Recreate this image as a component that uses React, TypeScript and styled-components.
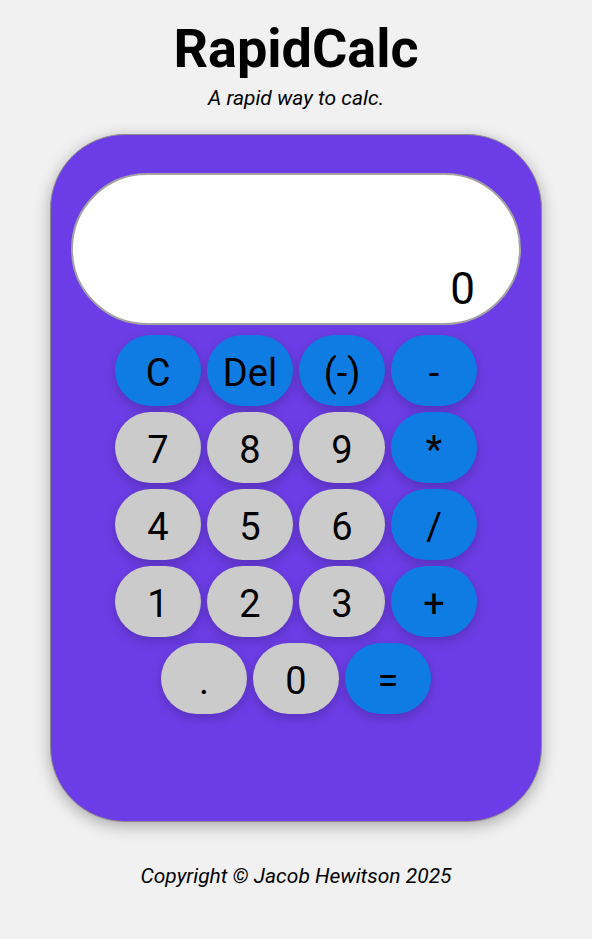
import React, { useState } from 'react';
import styled, { createGlobalStyle } from 'styled-components';

const GlobalStyle = createGlobalStyle`
  *, *::before, *::after { box-sizing: border-box; }
  body {
    margin: 0;
    background: #f1f1f1;
    color: #000;
    font-family: Roboto, sans-serif;
  }
`;

const Page = styled.div`
  display: flex;
  flex-direction: column;
  align-items: center;
  min-height: 100vh;
  padding: 17px 50px 48px;
`;

const Title = styled.h1`
  margin: 0;
  font-size: 54px;
  line-height: 64px;
  font-weight: 700;
`;

const Tagline = styled.p`
  margin: 3px 0 0;
  font-size: 21px;
  line-height: 28px;
  font-style: italic;
`;

const Body = styled.main`
  display: flex;
  flex-direction: column;
  align-items: center;
  width: 100%;
  max-width: 492px;
  margin-top: 22px;
  padding: 38px 20px 107px;
  border: 1px solid #8c8c8c;
  border-radius: 75px;
  background: #6c3de6;
  box-shadow: 0 4px 16px rgba(0, 0, 0, 0.3);
`;

const Display = styled.output`
  display: flex;
  align-items: flex-end;
  justify-content: flex-end;
  width: 100%;
  height: 152px;
  padding: 0 44px 8px;
  border: 2px solid #a3a3a3;
  border-radius: 76px;
  background: #fff;
  font-size: 44px;
  line-height: 52px;
  overflow: hidden;
`;

const Keypad = styled.div`
  display: flex;
  flex-direction: column;
  gap: 6px;
  margin-top: 10px;
`;

const Row = styled.div`
  display: flex;
  justify-content: center;
  gap: 6px;
`;

const Key = styled.button<{ $accent?: boolean }>`
  width: 86px;
  height: 71px;
  padding: 4px 0 0;
  border: 0;
  border-radius: 36px;
  background: ${({ $accent }) => ($accent ? '#0f7ce3' : '#cbcbcb')};
  color: #000;
  font: 400 38px/44px Roboto, sans-serif;
  box-shadow: 0 4px 12px rgba(0, 0, 0, 0.2);
  cursor: pointer;
`;

const Footer = styled.footer`
  margin-top: 40px;
  font-size: 21px;
  line-height: 28px;
  font-style: italic;
`;

const rows = [
  ['C', 'Del', '(-)', '-'],
  ['7', '8', '9', '*'],
  ['4', '5', '6', '/'],
  ['1', '2', '3', '+'],
  ['.', '0', '='],
];

const operators = ['-', '*', '/', '+'];

function compute(a: number, op: string, b: number) {
  if (op === '+') return a + b;
  if (op === '-') return a - b;
  if (op === '*') return a * b;
  return a / b;
}

export default function App() {
  const [value, setValue] = useState('0');
  const [stored, setStored] = useState<number | null>(null);
  const [operator, setOperator] = useState('');
  const [fresh, setFresh] = useState(true);

  const press = (key: string) => {
    if (key === 'C') {
      setValue('0');
      setStored(null);
      setOperator('');
      setFresh(true);
    } else if (key === 'Del') {
      setValue(value.length > 1 ? value.slice(0, -1) : '0');
      if (value.length <= 1) setFresh(true);
    } else if (key === '(-)') {
      setValue(String(-Number(value)));
    } else if (operators.includes(key) || key === '=') {
      const result =
        stored !== null && operator ? compute(stored, operator, Number(value)) : Number(value);
      setValue(String(result));
      setStored(key === '=' ? null : result);
      setOperator(key === '=' ? '' : key);
      setFresh(true);
    } else {
      if (key === '.' && !fresh && value.includes('.')) return;
      setValue(fresh ? (key === '.' ? '0.' : key) : value + key);
      setFresh(false);
    }
  };

  return (
    <>
      <GlobalStyle />
      <Page>
        <Title>RapidCalc</Title>
        <Tagline>A rapid way to calc.</Tagline>
        <Body>
          <Display>{value}</Display>
          <Keypad>
            {rows.map((row) => (
              <Row key={row[0]}>
                {row.map((key) => (
                  <Key key={key} type="button" $accent={!/[\d.]/.test(key)} onClick={() => press(key)}>
                    {key}
                  </Key>
                ))}
              </Row>
            ))}
          </Keypad>
        </Body>
        <Footer>Copyright © Jacob Hewitson 2025</Footer>
      </Page>
    </>
  );
}
